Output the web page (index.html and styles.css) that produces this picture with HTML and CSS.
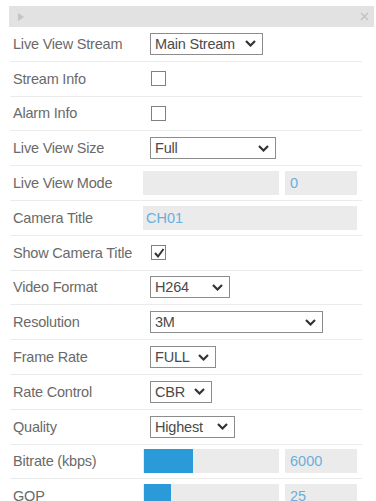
FILE: index.html
```html
<!DOCTYPE html>
<html>
<head>
<meta charset="utf-8">
<link rel="stylesheet" href="styles.css">
</head>
<body>
<div class="panel-head">
  <svg class="tri" width="6" height="8" viewBox="0 0 6 8"><polygon points="0,0 6,4 0,8" fill="#c4c4c4"/></svg>
  <svg class="close" width="9" height="9" viewBox="0 0 9 9"><path d="M1 1L8 8M8 1L1 8" stroke="#c0c0c0" stroke-width="1.3"/></svg>
</div>
<div class="rows">
  <div class="row">
    <div class="label">Live View Stream</div>
    <div class="select w113"><span>Main Stream</span><svg class="chev" width="11" height="7" viewBox="0 0 11 7"><polyline points="1,1 5.5,5.5 10,1" fill="none" stroke="#333" stroke-width="2.2"/></svg></div>
  </div>
  <div class="row">
    <div class="label">Stream Info</div>
    <div class="check"></div>
  </div>
  <div class="row">
    <div class="label">Alarm Info</div>
    <div class="check"></div>
  </div>
  <div class="row">
    <div class="label">Live View Size</div>
    <div class="select w126"><span>Full</span><svg class="chev" width="11" height="7" viewBox="0 0 11 7"><polyline points="1,1 5.5,5.5 10,1" fill="none" stroke="#333" stroke-width="2.2"/></svg></div>
  </div>
  <div class="row">
    <div class="label">Live View Mode</div>
    <div class="field track"></div>
    <div class="field value"><span>0</span></div>
  </div>
  <div class="row">
    <div class="label">Camera Title</div>
    <div class="field wide"><span>CH01</span></div>
  </div>
  <div class="row">
    <div class="label">Show Camera Title</div>
    <div class="check checked"><svg width="12" height="12" viewBox="0 0 12 12"><polyline points="2,6 5,9.5 10.5,2" fill="none" stroke="#333" stroke-width="2"/></svg></div>
  </div>
  <div class="row">
    <div class="label">Video Format</div>
    <div class="select w80"><span>H264</span><svg class="chev" width="11" height="7" viewBox="0 0 11 7"><polyline points="1,1 5.5,5.5 10,1" fill="none" stroke="#333" stroke-width="2.2"/></svg></div>
  </div>
  <div class="row">
    <div class="label">Resolution</div>
    <div class="select w173"><span>3M</span><svg class="chev" width="11" height="7" viewBox="0 0 11 7"><polyline points="1,1 5.5,5.5 10,1" fill="none" stroke="#333" stroke-width="2.2"/></svg></div>
  </div>
  <div class="row">
    <div class="label">Frame Rate</div>
    <div class="select w66"><span>FULL</span><svg class="chev" width="11" height="7" viewBox="0 0 11 7"><polyline points="1,1 5.5,5.5 10,1" fill="none" stroke="#333" stroke-width="2.2"/></svg></div>
  </div>
  <div class="row">
    <div class="label">Rate Control</div>
    <div class="select w62"><span>CBR</span><svg class="chev" width="11" height="7" viewBox="0 0 11 7"><polyline points="1,1 5.5,5.5 10,1" fill="none" stroke="#333" stroke-width="2.2"/></svg></div>
  </div>
  <div class="row">
    <div class="label">Quality</div>
    <div class="select w85"><span>Highest</span><svg class="chev" width="11" height="7" viewBox="0 0 11 7"><polyline points="1,1 5.5,5.5 10,1" fill="none" stroke="#333" stroke-width="2.2"/></svg></div>
  </div>
  <div class="row">
    <div class="label">Bitrate (kbps)</div>
    <div class="field track"><div class="fill" style="width:49px"></div></div>
    <div class="field value"><span>6000</span></div>
  </div>
  <div class="row">
    <div class="label">GOP</div>
    <div class="field track"><div class="fill" style="width:27px"></div></div>
    <div class="field value"><span>25</span></div>
  </div>
</div>
</body>
</html>
```
FILE: styles.css
```css
html, body {
  margin: 0;
  padding: 0;
  background: #fff;
}
body {
  font-family: "Liberation Sans", Arial, sans-serif;
  font-size: 14.5px;
  color: #6a6a6a;
}
.panel-head {
  margin: 6px 2px 0 9px;
  height: 21px;
  background: #e2e2e2;
  display: flex;
  align-items: center;
  justify-content: space-between;
  padding: 0 5px 0 9px;
}
.rows {
  margin-left: 10px;
  width: 352px;
}
.row {
  height: 34.8px;
  box-sizing: border-box;
  border-bottom: 1px solid #ebebeb;
  display: flex;
  align-items: center;
}
.label {
  flex: 0 0 133px;
  box-sizing: border-box;
  padding-left: 3px;
  white-space: nowrap;
  color: #6a6a6a;
  letter-spacing: -0.2px;
}
.select {
  margin-left: 7px;
  height: 22px;
  box-sizing: border-box;
  border: 1px solid #8c8c8c;
  background: #fff;
  display: flex;
  align-items: center;
  justify-content: space-between;
  padding: 0 6px 0 4px;
  color: #4a4a4a;
  letter-spacing: -0.2px;
}
.w113 { width: 113px; }
.w126 { width: 126px; }
.w80 { width: 80px; }
.w173 { width: 173px; }
.w66 { width: 66px; }
.w62 { width: 62px; }
.w85 { width: 85px; }
.check {
  margin-left: 8px;
  width: 15px;
  height: 15px;
  box-sizing: border-box;
  border: 1px solid #808080;
  background: #fff;
  display: flex;
  align-items: center;
  justify-content: center;
}
.field {
  height: 24px;
  background: #ebebeb;
  display: flex;
  align-items: center;
  color: #6aafdc;
}
.track {
  width: 136px;
}
.fill {
  margin-left: 1px;
  height: 24px;
  background: #2a9ad8;
}
.value {
  width: 72px;
  margin-left: 6px;
  padding-left: 5px;
  box-sizing: border-box;
}
.wide {
  width: 214px;
  padding-left: 3px;
  box-sizing: border-box;
}
```
